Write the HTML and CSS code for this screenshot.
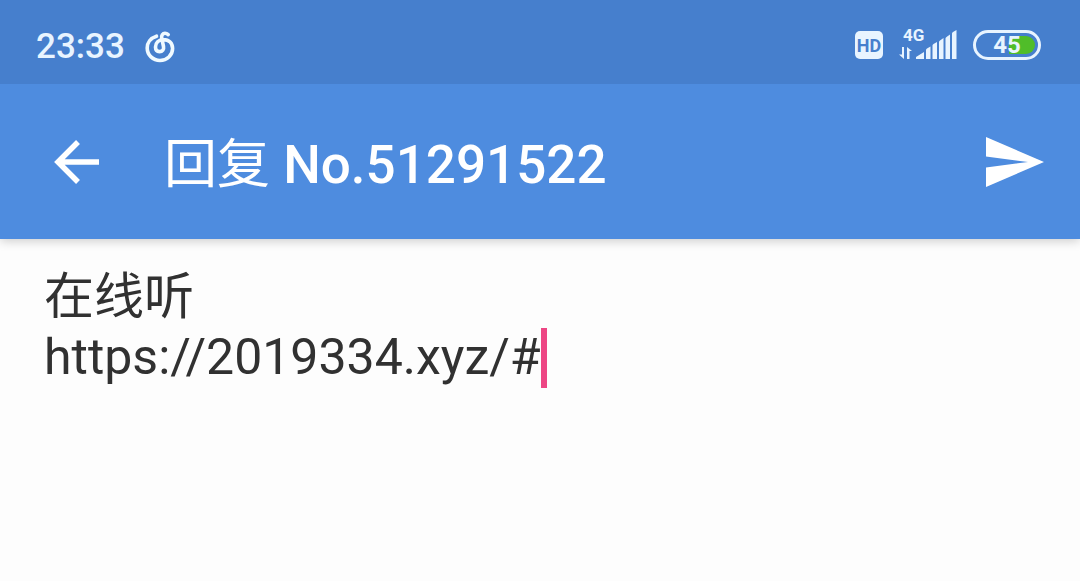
FILE: index.html
```html
<!DOCTYPE html>
<html lang="zh-CN">
<head>
<meta charset="utf-8">
<meta name="viewport" content="width=device-width, initial-scale=1">
<title>回复 No.51291522</title>
<link rel="stylesheet" href="styles.css">
</head>
<body>
<div class="status-bar">
  <div class="status-left">
    <time class="clock">23:33</time>
    <svg class="music-icon" viewBox="0 0 30 32" aria-hidden="true">
      <path d="M11.500 5.200C5.500 7 2.200 12 2.200 17C2.200 24 8 29.500 15 29.500C22 29.500 27.600 24 27.600 17.500C27.600 12 24 8.600 18.500 8.600C13.500 8.600 10.500 12 10.500 16C10.500 18.800 12 20.600 14.500 20.600C17.500 20.600 19.100 18.300 18.500 15.500L16.800 7.500C16 4.300 17.800 2.300 20 2.300C21.500 2.300 22.300 2.800 23.200 3.600"/>
    </svg>
  </div>
  <div class="status-right">
    <span class="hd-badge">HD</span>
    <div class="network">
      <span class="network-type">4G</span>
      <svg class="signal" viewBox="0 0 58 30" aria-hidden="true">
        <path d="M5 17V29L0 24.500H3V17ZM8 29V17L13 21H10.500V29Z"/>
        <path d="M17 29V27L25 22V29ZM27 29V20Q27 19 28 18.500L31.500 16.500V29ZM33.500 29V15.500Q33.500 14.500 34.500 14L38 12V29ZM40 29V12Q40 11 41 10.500L44.500 8V29ZM46.500 29V8.500Q46.500 7.500 47.500 7L51 4.500V29ZM53 29V3.500Q53 2.500 54 2L57.500 0V29Z"/>
      </svg>
    </div>
    <div class="battery"><div class="battery-level"></div><span class="battery-text">45</span></div>
  </div>
</div>
<header class="app-bar">
  <button class="icon-button" type="button" aria-label="返回">
    <svg class="back-icon" viewBox="0 0 46 44" aria-hidden="true"><path d="M24 2L4 22L24 42M4 22H45"/></svg>
  </button>
  <h1 class="title"><span class="title-word">回复</span> No.51291522</h1>
  <button class="icon-button" type="submit" form="reply" aria-label="发送">
    <svg class="send-icon" viewBox="0 0 58 50" aria-hidden="true"><path d="M0 0L58 25L0 50V30.500L42 25L0 19.500Z"/></svg>
  </button>
</header>
<main class="content">
  <form class="reply-form" id="reply">
    <textarea class="editor" aria-label="回复内容" spellcheck="false">在线听
https://2019334.xyz/#</textarea>
    <span class="caret" aria-hidden="true"></span>
  </form>
</main>
</body>
</html>
```
FILE: styles.css
```css
* {
  box-sizing: border-box;
}

body {
  margin: 0;
  min-height: 100vh;
  display: flex;
  flex-direction: column;
  background: #fdfdfd;
  font-family: Roboto, "Noto Sans CJK SC", sans-serif;
}

.status-bar {
  position: relative;
  z-index: 1;
  display: flex;
  justify-content: space-between;
  align-items: center;
  height: 84px;
  padding: 6px 39px 0 36px;
  background: #467fcd;
  color: #e8f4ff;
}

.status-left,
.status-right {
  display: flex;
  align-items: center;
}

.status-left {
  gap: 20px;
  padding-top: 3px;
}

.status-right {
  gap: 16px;
}

.clock {
  font-size: 35px;
  font-weight: 500;
  line-height: 40px;
}

.music-icon {
  width: 30px;
  height: 32px;
  fill: none;
  stroke: #f0faff;
  stroke-width: 3.6;
  stroke-linecap: round;
}

.hd-badge {
  width: 28px;
  height: 28px;
  border-radius: 5px;
  background: #e8f4ff;
  color: #467fcd;
  font-size: 18px;
  font-weight: 700;
  line-height: 30px;
  text-align: center;
}

.network {
  position: relative;
  display: flex;
}

.network-type {
  position: absolute;
  top: -3px;
  left: 4px;
  font-size: 17px;
  font-weight: 700;
  line-height: 16px;
}

.signal {
  width: 58px;
  height: 30px;
  fill: #e8f4ff;
}

.battery {
  position: relative;
  width: 68px;
  height: 30px;
  border: 3px solid #e8f4ff;
  border-radius: 15px;
  text-align: center;
}

.battery-level {
  position: absolute;
  top: 3px;
  right: 3px;
  bottom: 3px;
  width: 26px;
  border-radius: 0 9px 9px 0;
  background: #50bd29;
}

.battery-text {
  position: relative;
  display: block;
  font-size: 24px;
  font-weight: 700;
  line-height: 25px;
}

.app-bar {
  position: relative;
  display: flex;
  align-items: center;
  height: 155px;
  padding: 0 36px 0 54px;
  background: #4e8cdf;
  color: #fff;
  box-shadow: 0 2px 10px rgba(0, 0, 0, 0.2);
}

.icon-button {
  display: flex;
  padding: 0;
  border: 0;
  background: none;
}

.back-icon {
  width: 46px;
  height: 44px;
  fill: none;
  stroke: #fff;
  stroke-width: 5.5;
}

.send-icon {
  width: 58px;
  height: 50px;
  fill: #fff;
}

.title {
  flex: 1;
  margin: 0 0 0 64px;
  padding-top: 6px;
  font-size: 53px;
  font-weight: 500;
  line-height: 76px;
}

.title-word {
  font-weight: 400;
}

.content,
.reply-form {
  flex: 1;
  display: flex;
}

.reply-form {
  position: relative;
}

.editor {
  flex: 1;
  padding: 28px 44px;
  border: 0;
  outline: 0;
  resize: none;
  background: transparent;
  color: #313131;
  caret-color: #ed4684;
  font: inherit;
  font-size: 50px;
  line-height: 60px;
}

.caret {
  position: absolute;
  top: 89px;
  left: 541px;
  width: 6px;
  height: 60px;
  background: #ed4684;
}
```
